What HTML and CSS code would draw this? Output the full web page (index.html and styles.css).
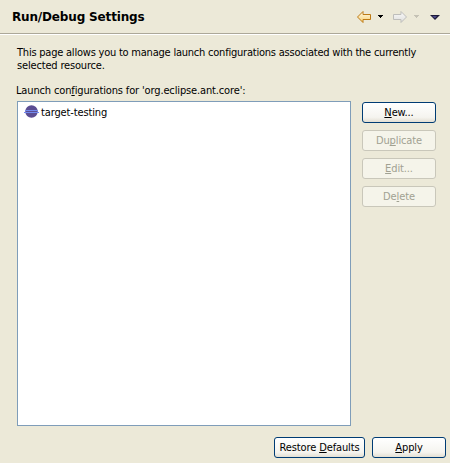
FILE: index.html
```html
<!DOCTYPE html>
<html lang="en">
<head>
<meta charset="utf-8">
<title>Run/Debug Settings</title>
<link rel="stylesheet" href="styles.css">
</head>
<body>
<div class="page">
  <header class="header">
    <h1 class="title">Run/Debug Settings</h1>
    <svg class="nav" width="84" height="16" viewBox="0 0 84 16">
      <defs>
        <linearGradient id="gold" x1="0" y1="0" x2="0" y2="1"><stop offset="0" stop-color="#fffbe8"/><stop offset="1" stop-color="#f8cf72"/></linearGradient>
        <linearGradient id="grey" x1="0" y1="0" x2="0" y2="1"><stop offset="0" stop-color="#fafafa"/><stop offset="1" stop-color="#dededc"/></linearGradient>
      </defs>
      <path d="M1.500 8 7 2.500V5.500H14.500V10.500H7V13.500Z" fill="url(#gold)" stroke="#bd7a16" stroke-linejoin="round"/>
      <path d="M22 6h5v1h-1v1h-1v1h-1V8h-1V7h-1z" fill="#000"/>
      <path d="M50.500 8 45 2.500V5.500H37.500V10.500H45V13.500Z" fill="url(#grey)" stroke="#bebebb" stroke-linejoin="round"/>
      <path d="M58 6h5v1h-1v1h-1v1h-1V8h-1V7h-1z" fill="#c5c2b5"/>
      <path d="M74 6h10l-5 5z" fill="#1c1a38"/>
      <path d="M76 7h5l-2 2.500z" fill="#4c4a88"/>
    </svg>
  </header>
  <main class="content">
    <p class="description"><span class="line-one">This page allows you to manage launch configurations associated with the currently</span><br><span class="line-two">selected resource.</span></p>
    <div class="label">Launch con<u>f</u>igurations for 'org.eclipse.ant.core':</div>
    <div class="columns">
      <div class="list">
        <div class="item">
          <svg width="16" height="14" viewBox="0 0 16 14">
            <circle cx="7.500" cy="6.500" r="6.200" fill="#5b4d92"/>
            <path d="M1 5.500H14M0 7.500H15" stroke="#7289ed"/>
          </svg>
          <span class="item-name">target-testing</span>
        </div>
      </div>
      <div class="actions">
        <button class="button"><span><u>N</u>ew...</span></button>
        <button class="button" disabled><span>Du<u>p</u>licate</span></button>
        <button class="button" disabled><span><u>E</u>dit...</span></button>
        <button class="button" disabled><span>De<u>l</u>ete</span></button>
      </div>
    </div>
  </main>
  <footer class="footer">
    <button class="button wide"><span>Restore <u>D</u>efaults</span></button>
    <button class="button"><span><u>A</u>pply</span></button>
  </footer>
</div>
</body>
</html>
```
FILE: styles.css
```css
* { box-sizing: border-box; }
body {
  margin: 0;
  background: #ece9d8;
  color: #000;
  font: 11px/13px "DejaVu Sans Condensed", "DejaVu Sans", sans-serif;
}
.page { width: 450px; height: 463px; display: flex; flex-direction: column; overflow: hidden; }
.header {
  height: 35px;
  flex: none;
  display: flex;
  justify-content: space-between;
  align-items: flex-start;
  padding: 9px 10px 0 12px;
  border-bottom: 1px solid #fff;
  box-shadow: inset 0 -1px #aca899;
}
.title { margin: 1px 0 0; font: bold 12px/15px "DejaVu Sans", sans-serif; letter-spacing: -0.16px; white-space: nowrap; }
.nav { flex: none; }
.content { padding: 11px 14px 0 17px; }
.description { margin: 0; white-space: nowrap; }
.line-one { letter-spacing: -0.22px; }
.line-two { letter-spacing: -0.17px; }
.label { margin: 12px 0 4px -1px; letter-spacing: -0.14px; white-space: nowrap; }
.item-name { letter-spacing: -0.13px; }
u { text-decoration: underline; text-decoration-thickness: 1px; text-underline-offset: 1px; text-decoration-skip-ink: none; }
.columns { display: flex; gap: 11px; }
.list { width: 334px; height: 325px; background: #fff; border: 1px solid #7f9db9; padding: 3px 6px; }
.item { display: flex; gap: 1px; align-items: center; height: 14px; white-space: nowrap; }
.actions { display: flex; flex-direction: column; gap: 7px; padding-top: 1px; }
.button {
  display: flex;
  align-items: center;
  justify-content: center;
  width: 74px;
  height: 21px;
  padding: 0 0 1px;
  font: inherit;
  letter-spacing: -0.12px;
  color: #000;
  white-space: nowrap;
  border: 1px solid #003c74;
  border-radius: 3px;
  background: linear-gradient(#fff, #f5f4ef 75%, #e3dfd3);
}
.button:disabled { color: #a1a192; border-color: #c9c7ba; background: #f5f4ea; }
.wide { width: 91px; }
.footer { display: flex; justify-content: flex-end; gap: 7px; padding: 11px 4px 0 0; }
```
